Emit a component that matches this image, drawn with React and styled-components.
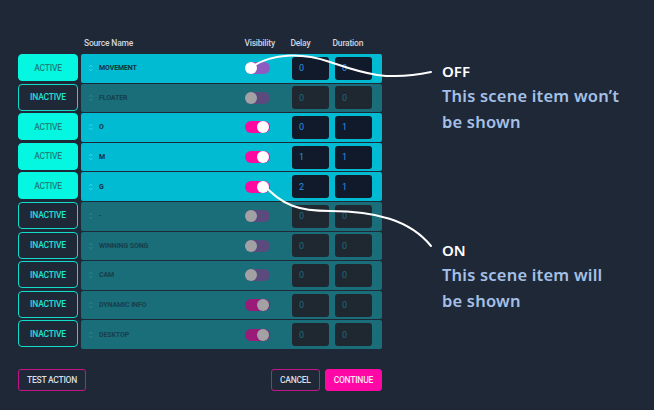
import React from 'react'
import styled, { createGlobalStyle } from 'styled-components';

const GlobalStyle = createGlobalStyle`
  body {
    margin: 0;
    background-color: #1f2837;
    font-family: Roboto, "Liberation Sans", sans-serif;
  }
`;

const Page = styled.div`
  position: relative;
  width: 654px;
  height: 410px;
  display: flex;
  padding: 35px 0 0 18px;
  box-sizing: border-box;
  overflow: hidden;
`;

const Table = styled.div`
  width: 364px;
  display: flex;
  flex-direction: column;
`;

const HeaderRow = styled.div`
  height: 19px;
  display: flex;
  padding-left: 66px;
`;

const HeaderCell = styled.div`
  width: ${p => p.$w}px;
  font-size: 8.5px;
  line-height: 16px;
  font-weight: 500;
  color: #cfd5de;
  letter-spacing: -0.2px;
`;

const Rows = styled.div`
  display: flex;
  flex-direction: column;
  gap: 1px;
`;

const Row = styled.div`
  height: 28.6px;
  display: flex;
  gap: 3px;
`;

const StateButton = styled.div`
  width: 60px;
  height: 27px;
  box-sizing: border-box;
  border-radius: 4px;
  display: flex;
  align-items: center;
  justify-content: center;
  font-size: 8.5px;
  font-weight: 500;
  letter-spacing: -0.2px;
  background-color: ${p => (p.$active ? '#05f6e1' : '#1f2837')};
  border: 1.5px solid ${p => (p.$active ? '#05f6e1' : '#12dccb')};
  color: ${p => (p.$active ? '#1d7f7c' : '#1ee3d1')};
`;

const Panel = styled.div`
  flex: 1;
  display: flex;
  align-items: center;
  padding: 0 10px 0 7px;
  border-radius: 2px;
  background-color: ${p => (p.$active ? '#00bbd1' : '#1a6e79')};
`;

const Grip = styled.svg`
  width: 11px;
  height: 8px;
  flex-shrink: 0;
`;

const Name = styled.div`
  flex: 1;
  font-size: 7px;
  font-weight: 700;
  letter-spacing: -0.1px;
  color: ${p => (p.$active ? '#13303f' : '#173f4b')};
`;

const Track = styled.div`
  width: 25px;
  height: 12px;
  border-radius: 6px;
  display: flex;
  align-items: center;
  justify-content: ${p => (p.$on ? 'flex-end' : 'flex-start')};
  background-color: ${p => p.$color};
  margin-right: 22px;
`;

const Knob = styled.div`
  width: 12px;
  height: 12px;
  border-radius: 50%;
  background-color: ${p => (p.$active ? '#ffffff' : '#a2a2a4')};
  margin: 0 ${p => (p.$on ? '1px' : '0')};
`;

const NumberBox = styled.div`
  width: 37px;
  height: 23px;
  box-sizing: border-box;
  border-radius: 3px;
  padding-left: 7px;
  display: flex;
  align-items: center;
  font-size: 9px;
  margin-left: ${p => p.$gap || 0}px;
  background-color: ${p => (p.$active ? '#111a2a' : '#1f2731')};
  color: ${p => (p.$active ? '#2b8fe0' : '#1c6a78')};
`;

const Footer = styled.div`
  margin-top: 20px;
  display: flex;
  align-items: center;
  gap: 5px;
`;

const Spacer = styled.div`
  flex: 1;
`;

const FooterButton = styled.div`
  height: 22px;
  padding: 0 ${p => p.$pad}px;
  box-sizing: border-box;
  border-radius: 3px;
  display: flex;
  align-items: center;
  font-size: 8.5px;
  font-weight: 500;
  letter-spacing: -0.25px;
  border: 1.5px solid ${p => (p.$primary ? '#ff08a6' : '#c4168b')};
  background-color: ${p => (p.$primary ? '#ff08a6' : 'transparent')};
  color: ${p => (p.$primary ? '#ffe4f2' : '#d9dde4')};
`;

const Notes = styled.div`
  margin-left: 60px;
  padding-top: 24px;
  display: flex;
  flex-direction: column;
  font-family: "Noto Sans", "Open Sans", sans-serif;
  font-weight: 600;
`;

const Note = styled.div`
  margin-top: ${p => p.$top}px;
`;

const NoteTitle = styled.div`
  color: #ffffff;
  font-size: 15px;
  line-height: 24px;
`;

const NoteText = styled.div`
  color: #a4c0e6;
  width: 182px;
  font-size: 16.5px;
  line-height: 25.5px;
  letter-spacing: 0.2px;
`;

const Curves = styled.svg`
  position: absolute;
  left: 0;
  top: 0;
  pointer-events: none;
`;

const rows = [
  { active: true, name: 'MOVEMENT', on: false, delay: 0, duration: 0 },
  { active: false, name: 'FLOATER', on: false, delay: 0, duration: 0 },
  { active: true, name: 'O', on: true, delay: 0, duration: 1 },
  { active: true, name: 'M', on: true, delay: 1, duration: 1 },
  { active: true, name: 'G', on: true, delay: 2, duration: 1 },
  { active: false, name: '-', on: false, delay: 0, duration: 0 },
  { active: false, name: 'WINNING SONG', on: false, delay: 0, duration: 0 },
  { active: false, name: 'CAM', on: false, delay: 0, duration: 0 },
  { active: false, name: 'DYNAMIC INFO', on: true, delay: 0, duration: 0 },
  { active: false, name: 'DESKTOP', on: true, delay: 0, duration: 0 },
];

function trackColor(active, on) {
  if (active) return on ? '#ff0aa0' : '#8e5cc0';
  return on ? '#9b1b79' : '#5b4a7d';
}

function Toggle({ active, on }) {
  return (
    <Track $on={on} $color={trackColor(active, on)}>
      <Knob $on={on} $active={active} />
    </Track>
  );
}

function SceneRow({ item }) {
  return (
    <Row>
      <StateButton $active={item.active}>{item.active ? 'ACTIVE' : 'INACTIVE'}</StateButton>
      <Panel $active={item.active}>
        <Grip viewBox="0 0 11 8">
          <path
            d="M1 3 L2.75 1.2 L4.5 3 M1 5 L2.75 6.8 L4.5 5"
            fill="none"
            stroke={item.active ? '#3fd8ea' : '#278a96'}
            strokeWidth="0.9"
          />
        </Grip>
        <Name $active={item.active}>{item.name}</Name>
        <Toggle active={item.active} on={item.on} />
        <NumberBox $active={item.active}>{item.delay}</NumberBox>
        <NumberBox $active={item.active} $gap={6}>{item.duration}</NumberBox>
      </Panel>
    </Row>
  );
}

function App() {
  return (
    <Page>
      <GlobalStyle />
      <Table>
        <HeaderRow>
          <HeaderCell $w={162}>Source Name</HeaderCell>
          <HeaderCell $w={46.5}>Visibility</HeaderCell>
          <HeaderCell $w={42.5}>Delay</HeaderCell>
          <HeaderCell $w={50}>Duration</HeaderCell>
        </HeaderRow>
        <Rows>
          {rows.map((item, i) => (
            <SceneRow key={i} item={item} />
          ))}
        </Rows>
        <Footer>
          <FooterButton $pad={8}>TEST ACTION</FooterButton>
          <Spacer />
          <FooterButton $pad={8}>CANCEL</FooterButton>
          <FooterButton $pad={8} $primary>CONTINUE</FooterButton>
        </Footer>
      </Table>
      <Notes>
        <Note $top={0}>
          <NoteTitle>OFF</NoteTitle>
          <NoteText>This scene item won’t be shown</NoteText>
        </Note>
        <Note $top={104}>
          <NoteTitle>ON</NoteTitle>
          <NoteText>This scene item will be shown</NoteText>
        </Note>
      </Notes>
      <Curves width="654" height="410" viewBox="0 0 654 410">
        <path
          d="M253 66 C272 54 300 52 330 62 C360 72 385 82 431 72"
          fill="none"
          stroke="#ffffff"
          strokeWidth="2"
          strokeLinecap="round"
        />
        <path
          d="M263 184 C282 206 300 211 330 211 C375 211 410 220 431 246"
          fill="none"
          stroke="#ffffff"
          strokeWidth="2"
          strokeLinecap="round"
        />
      </Curves>
    </Page>
  );
}

export default App;
